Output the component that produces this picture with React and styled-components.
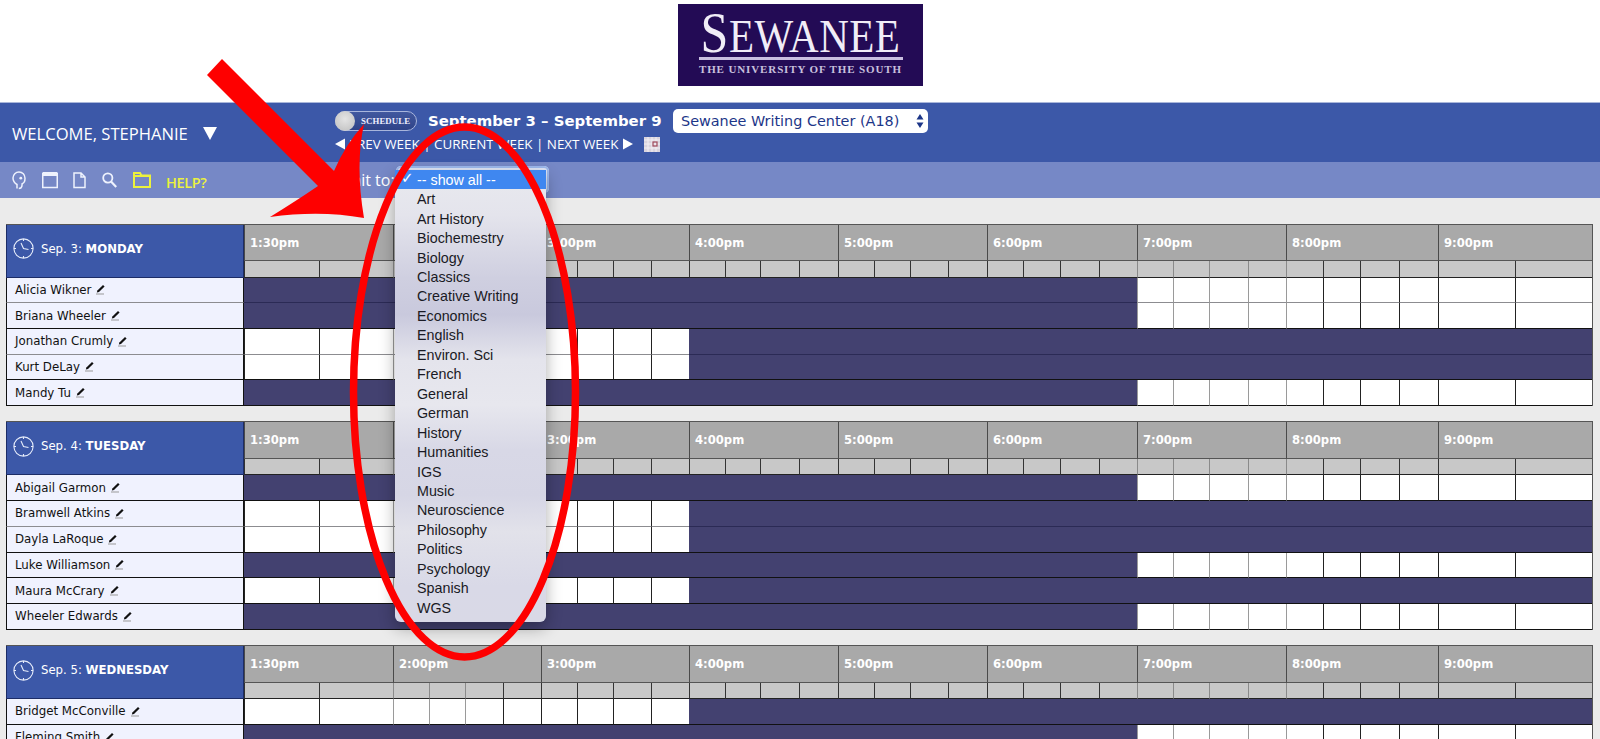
import React from "react";
import styled, { createGlobalStyle } from "styled-components";

const SLOT_WIDTHS = [75,74, 36,36,38,38, 36,36,38,38, 36,35,39,39, 36,36,38,39, 36,37,39,38, 36,36,39,38, 37,37,39,39, 77,77];
const HOURS = [
  ["1:30pm", 2], ["2:00pm", 4], ["3:00pm", 4], ["4:00pm", 4], ["5:00pm", 4],
  ["6:00pm", 4], ["7:00pm", 4], ["8:00pm", 4], ["9:00pm", 2],
];
const SOFT_LINES = new Set([2, 3, 4, 22, 23, 24, 25, 26]);
const TEMPLATE = `238px ${SLOT_WIDTHS.map((w) => `${w}px`).join(" ")}`;
const SUBJECTS = ["Art","Art History","Biochemestry","Biology","Classics","Creative Writing","Economics","English","Environ. Sci","French","General","German","History","Humanities","IGS","Music","Neuroscience","Philosophy","Politics","Psychology","Spanish","WGS"];
const DAYS = [
  { date: "Sep. 3:", name: "MONDAY", rows: [["Alicia Wikner","late"],["Briana Wheeler","late"],["Jonathan Crumly","early"],["Kurt DeLay","early"],["Mandy Tu","late"]] },
  { date: "Sep. 4:", name: "TUESDAY", rows: [["Abigail Garmon","late"],["Bramwell Atkins","early"],["Dayla LaRoque","early"],["Luke Williamson","late"],["Maura McCrary","early"],["Wheeler Edwards","late"]] },
  { date: "Sep. 5:", name: "WEDNESDAY", rows: [["Bridget McConville","early"],["Fleming Smith","late"]] },
];

const Global = createGlobalStyle`
  html, body { margin: 0; height: 739px; overflow: hidden; background: #fff; }
  * { box-sizing: border-box; }
`;
const Page = styled.div`position: relative; width: 1600px; height: 739px; overflow: hidden; background: #ebebeb; font-family: "DejaVu Sans", sans-serif;`;
const LogoBand = styled.div`height: 102px; background: #fff; display: flex; justify-content: center; padding-top: 4px; padding-left: 1px;`;
const Logo = styled.div`width: 245px; height: 82px; background: #230b55; display: flex; flex-direction: column; align-items: center; padding-top: 11px; color: #f1edf7; font-family: "Liberation Serif", serif;`;
const LogoWord = styled.div`font-size: 41px; line-height: 40px; height: 38px; letter-spacing: 0.5px; white-space: nowrap; transform: scaleY(1.12); transform-origin: 50% 90%;`;
const LogoInitial = styled.span`font-size: 50px;`;
const LogoRule = styled.div`width: 204px; height: 3px; background: #c9bfe0; margin-top: 4px;`;
const LogoTag = styled.div`font-size: 11px; font-weight: 700; color: #c9c0dd; letter-spacing: 0.88px; margin-top: 3px; white-space: nowrap;`;
const Bar = styled.div`height: 60px; background: #3c58a8; border-top: 1px solid #a9b6da; display: flex; color: #fff;`;
const Welcome = styled.div`width: 335px; padding: 1px 0 0 12px; display: flex; align-items: center; font-family: "Open Sans", sans-serif; font-weight: 500; font-size: 16.6px; gap: 15px; white-space: nowrap;`;
const Caret = styled.span`width: 0; height: 0; border-left: 7px solid transparent; border-right: 7px solid transparent; border-top: 13px solid #fff;`;
const WeekBlock = styled.div`display: flex; flex-direction: column; padding-top: 5px; gap: 3px;`;
const WeekTop = styled.div`display: flex; align-items: center; height: 25px;`;
const Toggle = styled.div`width: 82px; height: 20px; border-radius: 10px; border: 1px solid #a8b5dc; background: linear-gradient(#41589f, #2f4388); display: flex; align-items: center; gap: 6px; font-family: "Liberation Serif", serif; font-weight: 700; font-size: 8.8px; letter-spacing: 0.1px; color: #eef; margin-right: 11px;`;
const Knob = styled.span`width: 20px; height: 20px; margin-left: -1px; border-radius: 50%; background: radial-gradient(circle at 50% 40%, #e4e4e4, #c9c9c9 70%, #f2f2f2); flex: none;`;
const DateRange = styled.div`font-size: 14.9px; font-weight: 700; white-space: nowrap; width: 245px;`;
const Center = styled.div`width: 255px; height: 24px; background: #fff; border-radius: 5px; color: #1c3688; font-size: 14.4px; padding-left: 8px; display: flex; align-items: center; justify-content: space-between; padding-right: 3px; white-space: nowrap;`;
const NavRow = styled.div`display: flex; align-items: center; font-family: "Open Sans", sans-serif; font-weight: 500; font-size: 13.4px; white-space: nowrap; height: 16px;`;
const NavText = styled.span`margin: 0 4px 0 3px;`;
const CalendarLink = styled.svg`margin-left: 11px; flex: none;`;
const Tool = styled.div`height: 36px; background: #7688c6; display: flex; align-items: center; padding-left: 12px; position: relative;`;
const ToolIcon = styled.svg`width: ${(p) => p.$w}px; height: 20px; margin-right: ${(p) => p.$gap}px; flex: none;`;
const Help = styled.span`color: #ecf23c; font-family: "Open Sans", sans-serif; font-size: 14.4px; font-weight: 600; margin: 4px 126px 0 -1px; width: 42px; white-space: nowrap; letter-spacing: -0.3px;`;
const LimitLabel = styled.span`color: #fff; font-family: "Open Sans", sans-serif; font-size: 16px; white-space: nowrap;`;
const Days = styled.div`padding: 25.5px 0 0 6px; display: flex; flex-direction: column; gap: 15.5px;`;
const Day = styled.div`width: 1587px; display: grid; grid-template-columns: ${TEMPLATE}; grid-auto-rows: 25.7px; grid-template-rows: 36.5px 16.5px; border-top: 1px solid #555; border-right: 1px solid #555; background: #fff;`;
const DayHead = styled.div`grid-row: 1 / span 2; background: #3c58a8; border: 1px solid #1c2c66; border-top: none; color: #fff; display: flex; align-items: center; padding: 0 0 4px 6px; gap: 7px; font-size: 11.7px; white-space: nowrap;`;
const Clock = styled.svg`width: 21px; height: 21px; flex: none;`;
const Hour = styled.div`grid-column: span ${(p) => p.$span}; background: #a9a9a9; border-left: 1px solid #4a4a4a; border-bottom: 1px solid #555; color: #fff; font-weight: 700; font-size: 11.6px; padding: 11px 0 0 5px; white-space: nowrap;`;
const Sub = styled.div`background: #c8c8c8; border-left: 1px solid ${(p) => (p.$soft ? "#8a8a8a" : "#333")}; border-bottom: 1px solid #222;`;
const Name = styled.div`background: #f0f2fe; border-left: 1px solid #111; border-bottom: 1px solid ${(p) => (p.$strong ? "#111" : "#8c8c90")}; border-right: 1px solid #111; display: flex; align-items: center; gap: 4px; padding-left: 8px; font-size: 11.8px; color: #111; white-space: nowrap;`;
const Pencil = styled.svg`width: 10px; height: 11px; flex: none;`;
const Open = styled.div`background: #fff; border-left: 1px solid ${(p) => (p.$soft ? "#9a9a9a" : "#222")}; border-bottom: 1px solid ${(p) => (p.$strong ? "#111" : "#8c8c90")};`;
const Busy = styled.div`grid-column: span ${(p) => p.$span}; background: #434170; border-bottom: 1px solid ${(p) => (p.$strong ? "#111" : "#2b2a55")};`;
const SelectEdge = styled.div`position: absolute; left: 396px; top: 166px; width: 153px; height: 27px; border-radius: 5px; background: #dfe6f7; box-shadow: inset 0 0 0 2px #9db9ee;`;
const Menu = styled.div`position: absolute; left: 395px; top: 170px; width: 151px; height: 452px; border-radius: 0 0 6px 6px; padding-bottom: 5px; background: linear-gradient(#e9eaef 0%, #e4e4ec 10%, #cfcfe0 24%, #c9c9dd 32%, #e4e4ec 42%, #e7e7ee 52%, #d8d8e6 62%, #d6d6e5 72%, #e2e2ea 80%, #d9d9e7 92%, #d9d9e6 100%); box-shadow: 0 6px 16px rgba(0,0,0,.32); font-family: "Liberation Sans", sans-serif; font-size: 14.3px; color: #1a1a24;`;
const Option = styled.div`height: 19.46px; display: flex; align-items: center; padding-left: 22px; position: relative; white-space: nowrap; ${(p) => p.$active && "color: #fff; background: #3f87f0;"}`;
const Check = styled.span`position: absolute; left: 6px; top: -1px; font-size: 15px; color: #fff; font-weight: 700; font-family: "DejaVu Sans", sans-serif;`;
const Markup = styled.svg`position: absolute; inset: 0; width: 1600px; height: 739px; pointer-events: none;`;

const PencilIcon = () => (
  <Pencil viewBox="0 0 10 11">
    <path d="M8 1 L9.6 2.6 L4 8 L1.8 8.6 L2.4 6.4 Z" fill="#111" />
    <path d="M1 10 H9" stroke="#999" strokeWidth="1" />
  </Pencil>
);

const ClockIcon = () => (
  <Clock viewBox="0 0 21 21" fill="none" stroke="#e6ecfa" strokeWidth="1.1">
    <circle cx="10.5" cy="10.5" r="9.6" />
    <path d="M8 5 L10.5 10.5 L15.5 11.5" />
    <path d="M10.5 1v2M10.5 18v2M1 10.5h2M18 10.5h2" />
  </Clock>
);

const DayBlock = ({ day }) => (
  <Day>
    <DayHead>
      <ClockIcon />
      <span>{day.date} <b>{day.name}</b></span>
    </DayHead>
    {HOURS.map(([label, count]) => (
      <Hour key={label} $span={count}>{label}</Hour>
    ))}
    {SLOT_WIDTHS.map((_, i) => <Sub key={i} $soft={SOFT_LINES.has(i)} />)}
    {day.rows.map(([name, kind], r) => {
      const next = day.rows[r + 1];
      const strong = !next || next[1] !== kind;
      return (
        <React.Fragment key={name}>
          <Name $strong={strong}>{name}<PencilIcon /></Name>
          {kind === "late" ? (
            <>
              <Busy $span={22} $strong={strong} />
              {SLOT_WIDTHS.slice(22).map((_, i) => <Open key={i} $soft={SOFT_LINES.has(i + 22)} $strong={strong} />)}
            </>
          ) : (
            <>
              {SLOT_WIDTHS.slice(0, 10).map((_, i) => <Open key={i} $soft={SOFT_LINES.has(i)} $strong={strong} />)}
              <Busy $span={22} $strong={strong} />
            </>
          )}
        </React.Fragment>
      );
    })}
  </Day>
);

const Updown = () => (
  <svg width="10" height="16" viewBox="0 0 10 16"><path d="M5 1 L8.5 6.5 H1.5 Z M5 15 L8.5 9.5 H1.5 Z" fill="#1c3688" /></svg>
);

export default function App() {
  return (
    <Page>
      <Global />
      <LogoBand>
        <Logo>
          <LogoWord><LogoInitial>S</LogoInitial>EWANEE</LogoWord>
          <LogoRule />
          <LogoTag>THE UNIVERSITY OF THE SOUTH</LogoTag>
        </Logo>
      </LogoBand>
      <Bar>
        <Welcome>WELCOME, STEPHANIE <Caret /></Welcome>
        <WeekBlock>
          <WeekTop>
            <Toggle><Knob />SCHEDULE</Toggle>
            <DateRange>September 3 – September 9</DateRange>
            <Center>Sewanee Writing Center (A18)<Updown /></Center>
          </WeekTop>
          <NavRow>
            <svg width="11" height="12" viewBox="0 0 11 12"><path d="M0 6 L10 0.5 V11.5 Z" fill="#fff" /></svg>
            <NavText>PREV WEEK | CURRENT WEEK | NEXT WEEK</NavText>
            <svg width="11" height="12" viewBox="0 0 11 12"><path d="M11 6 L1 0.5 V11.5 Z" fill="#fff" /></svg>
            <CalendarLink width="16" height="15" viewBox="0 0 16 15">
              <rect width="16" height="15" fill="#d9d4de" />
              <path d="M0 3h16M0 7h16M0 11h16M4 0v15M8 0v15M12 0v15" stroke="#f2eff4" strokeWidth="1" />
              <rect x="9" y="5" width="4" height="4" fill="none" stroke="#a04a5c" strokeWidth="1.2" />
            </CalendarLink>
          </NavRow>
        </WeekBlock>
      </Bar>
      <Tool>
        <ToolIcon $w={14} $gap={16} viewBox="0 0 14 20" fill="none" stroke="#eef2fd" strokeWidth="1.5">
          <path d="M5 18.5 V14.5 C2.5 13 1 11 1 8 C1 4.5 3.8 2 7 2 C10.5 2 13 4.8 13 8.2 C13 11 12.2 13 10.2 13.6 L9.8 16.5 C9.4 18 7.8 18.5 6.8 18.5" />
          <circle cx="8.8" cy="8.2" r="1.4" fill="#eef2fd" stroke="none" />
        </ToolIcon>
        <ToolIcon $w={16} $gap={15} viewBox="0 0 16 20" fill="none">
          <rect x="0.75" y="3.5" width="14.5" height="14" stroke="#eef2fd" strokeWidth="1.5" />
          <rect x="0.75" y="2" width="14.5" height="4" fill="#eef2fd" />
        </ToolIcon>
        <ToolIcon $w={13} $gap={16} viewBox="0 0 13 20" fill="none" stroke="#eef2fd" strokeWidth="1.5">
          <path d="M1 3 H8 L12 7 V17.5 H1 Z M8 3 V7 H12" />
        </ToolIcon>
        <ToolIcon $w={15} $gap={16} viewBox="0 0 15 20" fill="none" stroke="#eef2fd" strokeWidth="1.8">
          <circle cx="5.8" cy="8" r="4.6" />
          <path d="M9 11.5 L14.2 17" strokeWidth="2.2" />
        </ToolIcon>
        <ToolIcon $w={18} $gap={16} viewBox="0 0 18 20" fill="none" stroke="#ecf23c" strokeWidth="2">
          <path d="M1 3 H7 L8.5 5.5 H17 V17 H1 Z M1 6 H17" />
        </ToolIcon>
        <Help>HELP?</Help>
        <LimitLabel>Limit to:</LimitLabel>
      </Tool>
      <Days>
        {DAYS.map((d) => <DayBlock key={d.name} day={d} />)}
      </Days>
      <SelectEdge />
      <Menu>
        <Option $active><Check>✓</Check>-- show all --</Option>
        {SUBJECTS.map((s) => <Option key={s}>{s}</Option>)}
      </Menu>
      <Markup viewBox="0 0 1600 739">
        <path d="M222 59 L207 75 L318 186 Q296 201 270 217 Q320 210 364 218 Q355 165 364 124 Q345 145 334 171 Z" fill="#fe0000" />
        <ellipse cx="464.5" cy="392" rx="111" ry="265" fill="none" stroke="#fe0000" strokeWidth="7.5" />
      </Markup>
    </Page>
  );
}
